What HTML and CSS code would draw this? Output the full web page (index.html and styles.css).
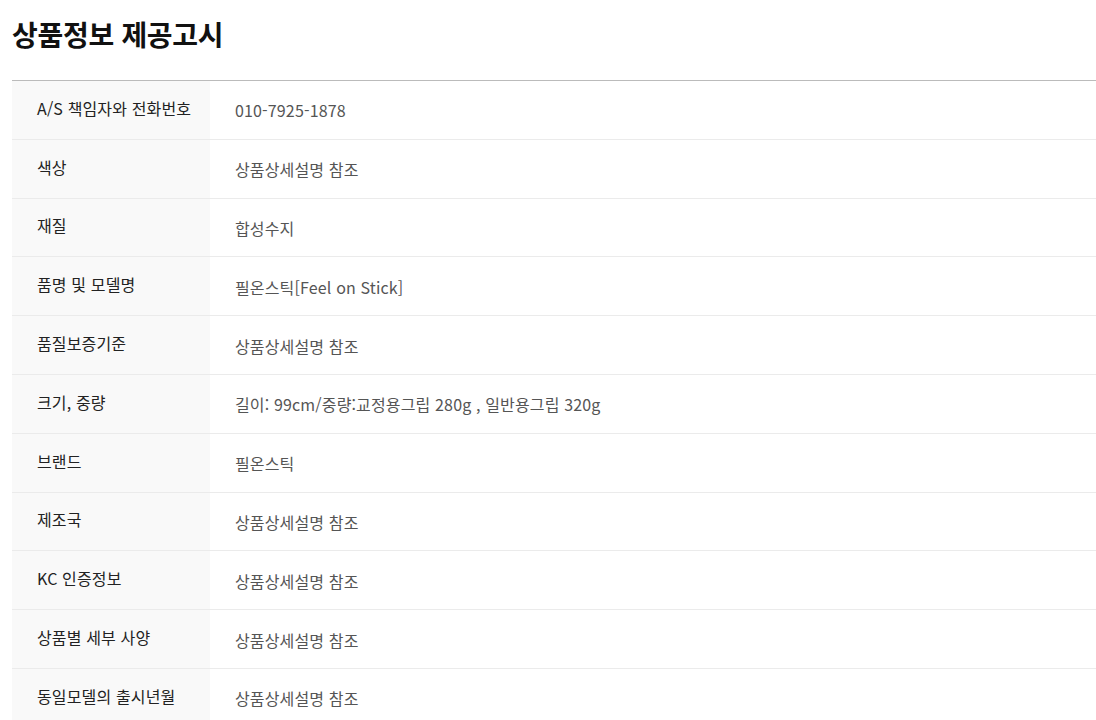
FILE: index.html
```html
<!DOCTYPE html>
<html lang="ko">
<head>
<meta charset="utf-8">
<link rel="stylesheet" href="styles.css">
</head>
<body>
<div class="page">
  <h2 class="title">상품정보 제공고시</h2>
  <table class="info">
    <tbody>
      <tr><th>A/S 책임자와 전화번호</th><td>010-7925-1878</td></tr>
      <tr><th>색상</th><td>상품상세설명 참조</td></tr>
      <tr><th>재질</th><td>합성수지</td></tr>
      <tr><th>품명 및 모델명</th><td>필온스틱[Feel on Stick]</td></tr>
      <tr><th>품질보증기준</th><td>상품상세설명 참조</td></tr>
      <tr><th>크기, 중량</th><td>길이: 99cm/중량:교정용그립 280g , 일반용그립 320g</td></tr>
      <tr><th>브랜드</th><td>필온스틱</td></tr>
      <tr><th>제조국</th><td>상품상세설명 참조</td></tr>
      <tr><th>KC 인증정보</th><td>상품상세설명 참조</td></tr>
      <tr><th>상품별 세부 사양</th><td>상품상세설명 참조</td></tr>
      <tr><th>동일모델의 출시년월</th><td>상품상세설명 참조</td></tr>
    </tbody>
  </table>
</div>
</body>
</html>
```
FILE: styles.css
```css
html, body {
  margin: 0;
  padding: 0;
  background: #fff;
}
body {
  font-family: "Noto Sans CJK KR", "Noto Sans", sans-serif;
  color: #222;
}
.page {
  padding: 0 0 0 12px;
}
.title {
  margin: 0;
  padding-top: 14px;
  height: 80px;
  box-sizing: border-box;
  font-size: 28px;
  font-weight: 700;
  line-height: 40px;
  color: #111;
  letter-spacing: -0.3px;
}
.info {
  width: 100%;
  border-collapse: collapse;
  border-top: 1px solid #bbb;
}
.info th,
.info td {
  border-bottom: 1px solid #ebebeb;
  font-size: 16px;
  line-height: 24px;
  height: 58.8px;
  box-sizing: border-box;
  text-align: left;
  padding: 0;
  letter-spacing: 0.15px;
}
.info th {
  width: 198px;
  background: #f9f9f9;
  color: #222;
  font-weight: 400;
  padding: 0 0 4px 25px;
}
.info td {
  color: #555;
  padding: 1px 0 0 25px;
}
```
